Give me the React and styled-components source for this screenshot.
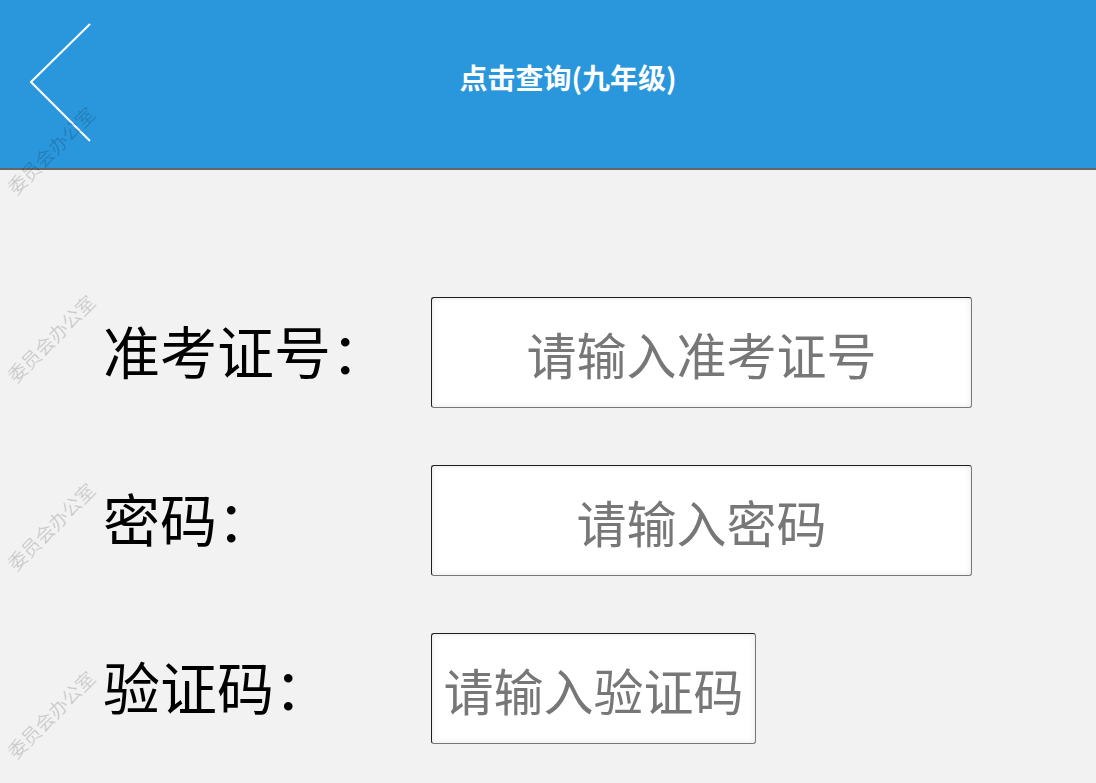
import styled, { createGlobalStyle } from "styled-components"

const BLUE = "#2a97dd"
const PAGE = "#f2f2f2"
const CJK = `"Noto Sans CJK SC", "Noto Sans", sans-serif`

const GlobalStyle = createGlobalStyle`
    html, body {
        margin: 0;
        padding: 0;
        background: ${PAGE};
        font-family: ${CJK};
    }
`

const fields = [
    { label: "准考证号：", placeholder: "请输入准考证号", width: 541 },
    { label: "密码：", placeholder: "请输入密码", width: 541 },
    { label: "验证码：", placeholder: "请输入验证码", width: 325 },
]

const marks = [103, 291, 479, 667]

export default function App() {
    return (
        <Page>
            <GlobalStyle />
            <Header>
                <BackButton aria-label="返回">
                    <svg width="62" height="120" viewBox="0 0 62 120">
                        <polyline points="60,1 1,59 60,118" fill="none" stroke="#fff" strokeWidth="2" />
                    </svg>
                </BackButton>
                <Title>点击查询(九年级)</Title>
            </Header>
            <Form>
                {fields.map((f) => (
                    <Row key={f.label}>
                        <Label>{f.label}</Label>
                        <Field placeholder={f.placeholder} $width={f.width} />
                    </Row>
                ))}
            </Form>
            <Watermarks>
                {marks.map((y) => (
                    <Mark key={y} $top={y}>委员会办公室</Mark>
                ))}
            </Watermarks>
        </Page>
    )
}

const Page = styled.div`
    position: relative;
    min-height: 783px;
    background: ${PAGE};
    overflow: hidden;
`
const Header = styled.header`
    height: 168px;
    background: ${BLUE};
    border-bottom: 2px solid #666;
    display: flex;
    align-items: center;
`
const BackButton = styled.div`
    width: 40px;
    flex-shrink: 0;
    height: 168px;
    display: flex;
    align-items: center;
    svg {
        margin-left: 30px;
        margin-top: -3px;
        flex-shrink: 0;
    }
`
const Title = styled.h1`
    flex: 1;
    margin: 0 0 14px;
    text-align: center;
    color: #fff;
    font-size: 28px;
    font-weight: 700;
`
const Form = styled.div`
    padding: 127px 0 0 103px;
    display: flex;
    flex-direction: column;
    gap: 57px;
`
const Row = styled.div`
    display: flex;
    align-items: center;
`
const Label = styled.div`
    width: 328px;
    flex-shrink: 0;
    font-size: 57px;
    color: #000;
    line-height: 1;
    margin-top: -6px;
`
const Field = styled.input`
    box-sizing: border-box;
    width: ${(p) => p.$width}px;
    height: 111px;
    padding: 0;
    border: 1px solid;
    border-color: #1e1e1e #777 #777 #1e1e1e;
    border-radius: 3px;
    background: #fff;
    box-shadow: inset 0 0 6px rgba(0, 0, 0, 0.1);
    font-family: ${CJK};
    font-size: 50px;
    text-align: center;
    color: #333;
    outline: none;
    &::placeholder {
        color: #777;
    }
`
const Watermarks = styled.div`
    position: absolute;
    inset: 0;
    pointer-events: none;
`
const Mark = styled.div`
    position: absolute;
    right: calc(100% - 84px);
    top: ${(p) => p.$top}px;
    white-space: nowrap;
    font-size: 19px;
    line-height: 1;
    color: rgba(0, 0, 0, 0.17);
    transform-origin: right top;
    transform: rotate(-45deg);
`
